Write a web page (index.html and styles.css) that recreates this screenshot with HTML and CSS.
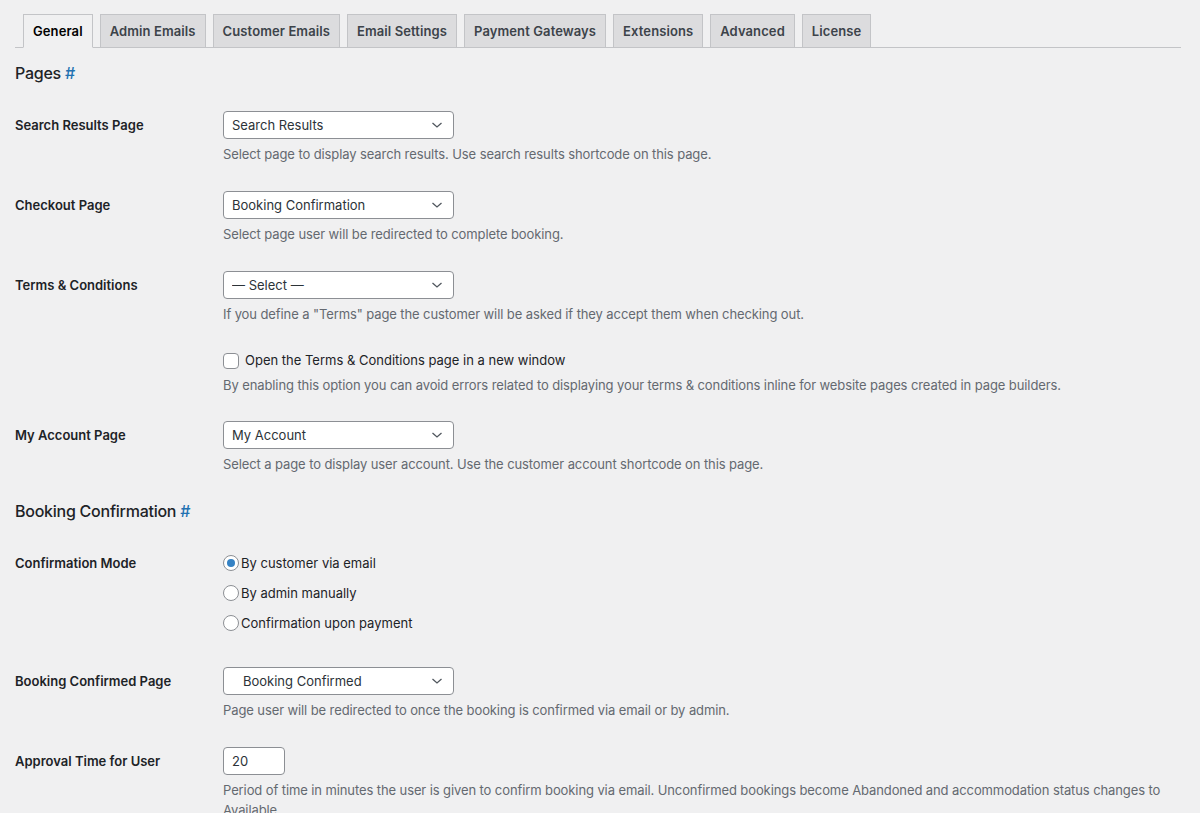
FILE: index.html
```
<!DOCTYPE html>
<html lang="en">
<head>
    <meta charset="UTF-8">
    <meta name="viewport" content="width=device-width, initial-scale=1.0">
    <title>Settings</title>
    <link rel="stylesheet" href="styles.css">
</head>
<body>
    <div class="wrap">
        <nav class="nav-tab-wrapper">
            <a class="nav-tab active" href="#">General</a>
            <a class="nav-tab" href="#">Admin Emails</a>
            <a class="nav-tab" href="#">Customer Emails</a>
            <a class="nav-tab" href="#">Email Settings</a>
            <a class="nav-tab" href="#">Payment Gateways</a>
            <a class="nav-tab" href="#">Extensions</a>
            <a class="nav-tab" href="#">Advanced</a>
            <a class="nav-tab" href="#">License</a>
        </nav>

        <h2 class="section-title">Pages <a href="#">#</a></h2>

        <div class="form-row">
            <div class="form-label">Search Results Page</div>
            <div class="form-field">
                <div class="select-wrap">
                    <select><option>Search Results</option></select>
                    <svg class="chevron" width="12" height="8" viewBox="0 0 12 8"><path d="M1.5 2l4.5 4 4.5-4" fill="none" stroke="#50575e" stroke-width="1.3"/></svg>
                </div>
                <p class="description">Select page to display search results. Use search results shortcode on this page.</p>
            </div>
        </div>

        <div class="form-row">
            <div class="form-label">Checkout Page</div>
            <div class="form-field">
                <div class="select-wrap">
                    <select><option>Booking Confirmation</option></select>
                    <svg class="chevron" width="12" height="8" viewBox="0 0 12 8"><path d="M1.5 2l4.5 4 4.5-4" fill="none" stroke="#50575e" stroke-width="1.3"/></svg>
                </div>
                <p class="description">Select page user will be redirected to complete booking.</p>
            </div>
        </div>

        <div class="form-row">
            <div class="form-label">Terms &amp; Conditions</div>
            <div class="form-field">
                <div class="select-wrap">
                    <select><option>— Select —</option></select>
                    <svg class="chevron" width="12" height="8" viewBox="0 0 12 8"><path d="M1.5 2l4.5 4 4.5-4" fill="none" stroke="#50575e" stroke-width="1.3"/></svg>
                </div>
                <p class="description">If you define a "Terms" page the customer will be asked if they accept them when checking out.</p>
            </div>
        </div>

        <div class="form-row short">
            <div class="form-label"></div>
            <div class="form-field">
                <label class="check"><span class="checkbox"></span>Open the Terms &amp; Conditions page in a new window</label>
                <p class="description">By enabling this option you can avoid errors related to displaying your terms &amp; conditions inline for website pages created in page builders.</p>
            </div>
        </div>

        <div class="form-row">
            <div class="form-label">My Account Page</div>
            <div class="form-field">
                <div class="select-wrap">
                    <select><option>My Account</option></select>
                    <svg class="chevron" width="12" height="8" viewBox="0 0 12 8"><path d="M1.5 2l4.5 4 4.5-4" fill="none" stroke="#50575e" stroke-width="1.3"/></svg>
                </div>
                <p class="description">Select a page to display user account. Use the customer account shortcode on this page.</p>
            </div>
        </div>

        <h2 class="section-title second">Booking Confirmation <a href="#">#</a></h2>

        <div class="form-row radios-row">
            <div class="form-label">Confirmation Mode</div>
            <div class="form-field">
                <label class="radio-line"><span class="radio checked"></span>By customer via email</label>
                <label class="radio-line"><span class="radio"></span>By admin manually</label>
                <label class="radio-line"><span class="radio"></span>Confirmation upon payment</label>
            </div>
        </div>

        <div class="form-row">
            <div class="form-label">Booking Confirmed Page</div>
            <div class="form-field">
                <div class="select-wrap">
                    <select><option>&nbsp;&nbsp;&nbsp;Booking Confirmed</option></select>
                    <svg class="chevron" width="12" height="8" viewBox="0 0 12 8"><path d="M1.5 2l4.5 4 4.5-4" fill="none" stroke="#50575e" stroke-width="1.3"/></svg>
                </div>
                <p class="description">Page user will be redirected to once the booking is confirmed via email or by admin.</p>
            </div>
        </div>

        <div class="form-row">
            <div class="form-label">Approval Time for User</div>
            <div class="form-field">
                <input class="small-text" type="text" value="20">
                <p class="description">Period of time in minutes the user is given to confirm booking via email. Unconfirmed bookings become Abandoned and accommodation status changes to Available.</p>
            </div>
        </div>
    </div>
</body>
</html>
```
FILE: styles.css
```
body {
    margin: 0;
    background-color: #f0f0f1;
    color: #1d2327;
    font-family: Inter, "Liberation Sans", Arial, sans-serif;
    font-size: 13px;
}
.wrap {
    padding: 0 19px 0 15px;
}
.nav-tab-wrapper {
    display: flex;
    gap: 7px;
    padding: 14px 0 0 8px;
    border-bottom: 1px solid #c3c4c7;
}
.nav-tab {
    display: block;
    padding: 4px 9px;
    margin-bottom: -1px;
    line-height: 24px;
    font-size: 13px;
    font-weight: 600;
    letter-spacing: 0.1px;
    color: #3c434a;
    text-decoration: none;
    background-color: #dcdcde;
    border: 1px solid #c3c4c7;
}
.nav-tab.active {
    color: #000;
    background-color: #f0f0f1;
    border-bottom-color: #f0f0f1;
}
.section-title {
    margin: 14px 0 12px;
    font-size: 16px;
    font-weight: 500;
    line-height: 22px;
    letter-spacing: -0.25px;
    color: #1d2327;
}
.section-title a {
    color: #2271b1;
    text-decoration: none;
}
.section-title.second {
    margin: 14px 0 24px;
}
.form-row {
    display: flex;
    padding: 15px 0 12px;
}
.form-row.short {
    padding-bottom: 11px;
}
.form-label {
    flex: 0 0 208px;
    font-size: 13px;
    font-weight: 600;
    line-height: 28px;
}
.form-field {
    flex: 1;
}
.select-wrap {
    position: relative;
    width: 231px;
}
select {
    display: block;
    width: 231px;
    height: 28px;
    padding: 0 24px 0 8px;
    font-family: inherit;
    font-size: 13px;
    color: #2c3338;
    background-color: #fff;
    border: 1px solid #8c8f94;
    border-radius: 4px;
    appearance: none;
    -webkit-appearance: none;
}
.chevron {
    position: absolute;
    top: 10px;
    right: 11px;
    pointer-events: none;
}
.description {
    margin: 5px 0 0;
    line-height: 20px;
    letter-spacing: -0.1px;
    color: #646970;
}
.check {
    display: flex;
    align-items: center;
    font-size: 13px;
    line-height: 19px;
    color: #1d2327;
}
.checkbox {
    width: 14px;
    height: 14px;
    margin-right: 6px;
    background-color: #fff;
    border: 1px solid #8c8f94;
    border-radius: 4px;
}
.radios-row {
    padding: 7px 0 9px;
}
.radios-row .form-label {
    line-height: 20px;
}
.radio-line {
    display: flex;
    align-items: center;
    height: 20px;
    margin-bottom: 10px;
    font-size: 13px;
    color: #1d2327;
}
.radio {
    position: relative;
    width: 14px;
    height: 14px;
    margin-right: 2px;
    background-color: #fff;
    border: 1px solid #8c8f94;
    border-radius: 50%;
}
.radio.checked::after {
    content: "";
    position: absolute;
    top: 3px;
    left: 3px;
    width: 8px;
    height: 8px;
    border-radius: 50%;
    background-color: #3582c4;
}
.small-text {
    display: block;
    box-sizing: border-box;
    width: 62px;
    height: 28px;
    padding: 0 8px;
    font-family: inherit;
    font-size: 13px;
    color: #2c3338;
    background-color: #fff;
    border: 1px solid #8c8f94;
    border-radius: 4px;
}
```
